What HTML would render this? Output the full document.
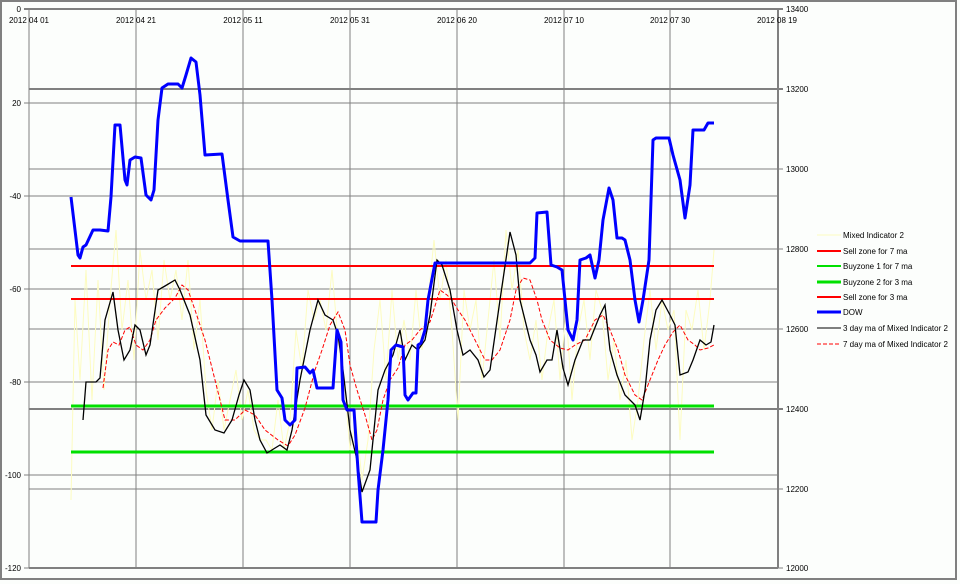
<!DOCTYPE html>
<html><head><meta charset="utf-8"><style>
html,body{margin:0;padding:0;background:#fcfefc;}
svg{display:block}
text{font-family:"Liberation Sans",sans-serif;font-size:8px;fill:#000}
</style></head><body>
<svg width="960" height="584" viewBox="0 0 960 584" xmlns="http://www.w3.org/2000/svg">
<rect x="0" y="0" width="960" height="584" fill="#fcfefc"/>
<rect x="1" y="1" width="955" height="578" fill="none" stroke="#808080" stroke-width="2"/>
<g stroke="#808080" stroke-width="1">
<line x1="29" y1="103" x2="778" y2="103"/><line x1="29" y1="196" x2="778" y2="196"/>
<line x1="29" y1="289" x2="778" y2="289"/><line x1="29" y1="382" x2="778" y2="382"/>
<line x1="29" y1="475" x2="778" y2="475"/>
<line x1="29" y1="169" x2="783" y2="169"/><line x1="29" y1="249" x2="783" y2="249"/>
<line x1="29" y1="329" x2="783" y2="329"/><line x1="29" y1="489" x2="783" y2="489"/>
<line x1="136" y1="9" x2="136" y2="568"/><line x1="243" y1="9" x2="243" y2="568"/>
<line x1="350" y1="9" x2="350" y2="568"/><line x1="457" y1="9" x2="457" y2="568"/>
<line x1="564" y1="9" x2="564" y2="568"/><line x1="670" y1="9" x2="670" y2="568"/>
<line x1="29" y1="9" x2="29" y2="568"/>
<line x1="24" y1="9" x2="29" y2="9"/><line x1="24" y1="103" x2="29" y2="103"/><line x1="24" y1="196" x2="29" y2="196"/><line x1="24" y1="289" x2="29" y2="289"/><line x1="24" y1="382" x2="29" y2="382"/><line x1="24" y1="475" x2="29" y2="475"/><line x1="24" y1="568" x2="29" y2="568"/>
<line x1="778" y1="9" x2="783" y2="9"/><line x1="778" y1="568" x2="783" y2="568"/>
</g>
<g stroke="#808080" stroke-width="2">
<line x1="24" y1="9" x2="783" y2="9"/>
<line x1="29" y1="89" x2="783" y2="89"/>
<line x1="29" y1="409" x2="783" y2="409"/>
<line x1="29" y1="568" x2="778" y2="568"/>
<line x1="778" y1="9" x2="778" y2="568"/>
</g>
<g text-anchor="end">
<text x="21" y="12">0</text><text x="21" y="106">20</text><text x="21" y="199">-40</text><text x="21" y="292">-60</text><text x="21" y="385">-80</text><text x="21" y="478">-100</text><text x="21" y="571">-120</text>
</g>
<g>
<text x="786" y="12">13400</text><text x="786" y="92">13200</text><text x="786" y="172">13000</text><text x="786" y="252">12800</text><text x="786" y="332">12600</text><text x="786" y="412">12400</text><text x="786" y="492">12200</text><text x="786" y="571">12000</text>
</g>
<g text-anchor="middle">
<text x="29" y="23">2012 04 01</text><text x="136" y="23">2012 04 21</text><text x="243" y="23">2012 05 11</text><text x="350" y="23">2012 05 31</text><text x="457" y="23">2012 06 20</text><text x="564" y="23">2012 07 10</text><text x="670" y="23">2012 07 30</text><text x="777" y="23">2012 08 19</text>
</g>
<polyline fill="none" stroke="#fdfcc0" stroke-width="1" points="71,500 75,300 80,380 86,270 92,400 98,280 104,390 110,300 116,230 122,330 128,280 134,360 140,250 146,300 152,270 158,340 164,260 170,300 176,270 182,320 188,260 194,350 200,300 206,390 212,430 218,380 224,430 230,400 236,370 242,420 248,390 254,430 260,440 266,440 272,450 278,400 284,450 290,420 296,330 302,370 308,290 314,320 320,300 326,330 332,270 338,340 344,380 350,450 356,420 362,480 368,440 374,350 380,300 386,380 392,290 398,360 404,320 410,360 416,290 422,350 428,300 434,240 440,300 446,260 452,330 458,420 464,290 470,330 476,300 482,380 488,320 494,260 500,340 506,230 512,290 518,250 524,330 530,360 536,320 542,380 548,330 554,300 560,380 566,310 572,400 578,330 584,300 590,360 596,290 602,310 608,380 614,340 620,400 626,360 632,440 638,400 644,340 650,290 656,350 662,300 668,330 674,310 680,440 686,310 692,330 698,290 704,350 710,300 714,250"/>
<g stroke-width="2">
<line x1="71" y1="266" x2="714" y2="266" stroke="#ff0000"/>
<line x1="71" y1="299" x2="714" y2="299" stroke="#ff0000"/>
</g>
<g stroke-width="3">
<line x1="71" y1="406" x2="714" y2="406" stroke="#00e000"/>
<line x1="71" y1="452" x2="714" y2="452" stroke="#00e000"/>
</g>
<polyline fill="none" stroke="#ff0000" stroke-width="1" stroke-dasharray="4,2" points="103,388 108,350 113,342 119,345 125,330 130,327 136,345 143,350 150,340 156,320 165,308 175,298 182,285 188,290 195,310 205,340 215,380 225,420 235,420 245,410 255,415 265,430 278,440 288,446 295,435 305,408 315,370 322,350 330,325 338,312 345,330 350,365 357,390 365,415 372,440 377,430 383,400 390,380 398,368 405,345 412,340 420,330 430,322 440,290 447,295 452,300 458,310 465,320 475,340 485,360 492,360 500,350 510,320 516,290 523,278 530,280 537,300 542,320 550,340 560,348 568,350 575,345 585,340 595,320 603,315 610,330 618,350 625,375 635,395 642,400 650,380 658,360 665,345 673,332 680,325 688,340 695,345 700,350 708,348 714,345"/>
<polyline fill="none" stroke="#000" stroke-width="1.3" points="83,420 86,382 96,382 100,378 105,320 113,292 118,330 124,360 130,350 135,325 140,330 146,355 150,345 158,290 165,286 175,280 180,290 190,315 200,360 206,415 215,430 224,433 232,420 239,395 244,380 250,390 255,420 260,440 267,453 280,445 287,450 292,430 300,380 310,330 318,300 325,315 333,320 338,335 343,370 350,430 357,460 362,492 370,470 378,390 385,370 393,355 400,330 405,360 412,345 418,350 425,340 430,315 437,260 442,265 450,290 457,330 463,355 470,350 478,360 484,377 490,370 500,300 510,232 516,255 520,300 530,340 536,355 540,372 547,360 552,360 557,330 563,368 568,385 575,360 583,340 590,340 600,315 605,305 610,350 617,375 625,395 635,405 640,420 645,390 650,340 656,310 662,300 670,315 675,325 680,375 688,372 693,360 700,340 706,345 711,342 714,325"/>
<polyline fill="none" stroke="#0000ff" stroke-width="3" stroke-linejoin="round" points="71,197 78,255 80,258 83,247 86,245 93,230 100,230 108,231 111,197 115,125 120,125 125,180 127,185 130,160 135,157 141,158 146,195 151,200 154,190 158,120 162,88 168,84 178,84 182,88 186,75 191,58 196,62 200,95 205,155 222,154 228,200 233,237 240,241 268,241 272,300 277,390 282,398 285,420 290,425 295,420 297,368 305,367 310,373 313,370 317,388 333,388 337,330 341,342 343,400 347,410 354,410 358,470 362,522 376,522 378,490 383,450 388,400 391,350 396,345 403,347 405,395 408,400 413,393 416,393 418,345 421,343 425,330 428,300 435,263 530,263 535,258 537,213 547,212 551,265 557,267 562,270 568,330 573,340 577,320 580,260 586,258 590,255 595,278 599,260 603,220 609,188 613,200 617,238 622,238 625,240 630,260 635,300 639,322 643,300 649,260 653,140 656,138 669,138 673,155 680,180 685,218 690,185 693,130 704,130 708,123 714,123"/>
<g>
<line x1="817" y1="235" x2="841" y2="235" stroke="#fdfcc0" stroke-width="1"/><text x="843" y="238">Mixed Indicator 2</text>
<line x1="817" y1="251" x2="841" y2="251" stroke="#ff0000" stroke-width="2"/><text x="843" y="254">Sell zone for 7 ma</text>
<line x1="817" y1="266" x2="841" y2="266" stroke="#00e000" stroke-width="2"/><text x="843" y="269">Buyzone 1 for 7 ma</text>
<line x1="817" y1="282" x2="841" y2="282" stroke="#00e000" stroke-width="3"/><text x="843" y="285">Buyzone 2 for 3 ma</text>
<line x1="817" y1="297" x2="841" y2="297" stroke="#ff0000" stroke-width="2"/><text x="843" y="300">Sell zone for 3 ma</text>
<line x1="817" y1="312" x2="841" y2="312" stroke="#0000ff" stroke-width="3"/><text x="843" y="315">DOW</text>
<line x1="817" y1="328" x2="841" y2="328" stroke="#000" stroke-width="1"/><text x="843" y="331">3 day ma of Mixed Indicator 2</text>
<line x1="817" y1="344" x2="841" y2="344" stroke="#ff0000" stroke-width="1" stroke-dasharray="4,2"/><text x="843" y="347">7 day ma of Mixed Indicator 2</text>
</g>
</svg>
</body></html>
